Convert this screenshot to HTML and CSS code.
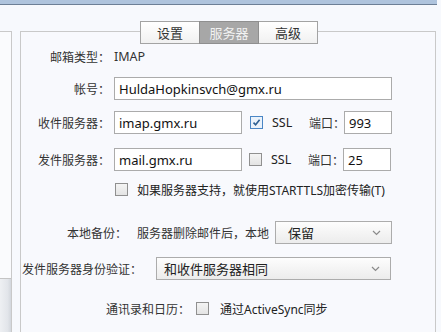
FILE: index.html
```html
<!DOCTYPE html>
<html lang="zh-CN">
<head>
    <meta charset="UTF-8">
    <meta name="viewport" content="width=device-width, initial-scale=1.0">
    <title>账户设置 - 服务器</title>
    <link rel="stylesheet" href="styles.css">
</head>
<body>
    <div class="topbar"></div>
    <div class="workspace">
        <div class="sidebar">
            <div class="sidebar-foot"></div>
        </div>
        <div class="panel">
            <div class="tabs">
                <div class="tab">设置</div>
                <div class="tab active">服务器</div>
                <div class="tab">高级</div>
            </div>

            <div class="row row-type">
                <span class="label">邮箱类型：</span>
                <span class="value">IMAP</span>
            </div>
            <div class="row row-account">
                <span class="label">帐号：</span>
                <input class="inp inp-wide" type="text" value="HuldaHopkinsvch@gmx.ru">
            </div>
            <div class="row row-in">
                <span class="label">收件服务器：</span>
                <input class="inp inp-mid" type="text" value="imap.gmx.ru">
                <span class="check checked">
                    <svg width="11" height="11" viewBox="0 0 11 11"><path d="M2.5 5.6 L4.6 7.8 L8.6 2.8" fill="none" stroke="#2c5f93" stroke-width="1.6"/></svg>
                </span>
                <span class="ssl">SSL</span>
                <span class="port-label">端口：</span>
                <input class="inp inp-port" type="text" value="993">
            </div>
            <div class="row row-out">
                <span class="label">发件服务器：</span>
                <input class="inp inp-mid" type="text" value="mail.gmx.ru">
                <span class="check"></span>
                <span class="ssl">SSL</span>
                <span class="port-label">端口：</span>
                <input class="inp inp-port" type="text" value="25">
            </div>
            <div class="row row-tls">
                <span class="check"></span>
                <span class="tls-text">如果服务器支持，就使用STARTTLS加密传输(T)</span>
            </div>
            <div class="row row-backup">
                <span class="label-free">本地备份：</span>
                <span class="note">服务器删除邮件后，本地</span>
                <div class="select sel-keep">
                    <span>保留</span>
                    <svg width="9" height="6" viewBox="0 0 9 6"><path d="M1 1 L4.5 4.5 L8 1" fill="none" stroke="#8a8a8a" stroke-width="1.2"/></svg>
                </div>
            </div>
            <div class="row row-auth">
                <span class="label-free">发件服务器身份验证：</span>
                <div class="select sel-auth">
                    <span>和收件服务器相同</span>
                    <svg width="9" height="6" viewBox="0 0 9 6"><path d="M1 1 L4.5 4.5 L8 1" fill="none" stroke="#8a8a8a" stroke-width="1.2"/></svg>
                </div>
            </div>
            <div class="row row-sync">
                <span class="label-free">通讯录和日历：</span>
                <span class="check"></span>
                <span class="sync-text">通过ActiveSync同步</span>
            </div>
        </div>
    </div>
</body>
</html>
```

FILE: styles.css
```css
* { box-sizing: border-box; }
html, body { margin: 0; padding: 0; }
body { font-family: "Noto Sans", "Noto Sans CJK SC", sans-serif; font-size: 12px; color: #2b2b2b; background: #f7f9fd; height: 332px; overflow: hidden; }

.topbar { height: 5px; background: #afc4dd; border-bottom: 1px solid #6d7f96; margin-right: 4px; }

.workspace { display: flex; margin-top: 26px; height: 301px; }
.sidebar { width: 12px; border-top: 1px solid #c9c9c9; border-right: 1px solid #c9c9c9; background: #fafbfd; display: flex; flex-direction: column; justify-content: flex-end; }
.sidebar-foot { height: 54px; border-top: 1px solid #c4c4c4; background: linear-gradient(90deg, #eef0f3 0%, #e2e5ea 70%, #d3d7dd 100%); }

.panel { flex: 1; margin-left: 8px; margin-right: 5px; border: 1px solid #c9c9c9; border-bottom: none; background: #f8f9fd; }

.tabs { display: flex; justify-content: center; margin-top: -11px; padding-left: 3px; }
.tab { width: 60px; height: 23px; border: 1px solid #a3a3a3; margin-left: -1px; background: linear-gradient(#ffffff, #f1f1f1); font-size: 13px; color: #333; display: flex; align-items: center; justify-content: center; }
.tab.active { background: #a7a7a7; border-color: #8f8f8f; color: #f2f2f2; position: relative; }

.row { display: flex; align-items: center; height: 23px; white-space: nowrap; }
.row > * { flex-shrink: 0; }
.label { width: 89px; text-align: right; margin-right: 4px; color: #333; }
.label-free { color: #333; }
.value { color: #333; font-size: 12.5px; }

.inp { height: 23px; border: 1px solid #ababab; background: #fff; padding: 0 0 0 4px; font-family: "Noto Sans", "Noto Sans CJK SC", sans-serif; font-size: 13px; color: #111; outline: none; }
.inp-wide { width: 278px; }
.inp-mid { width: 128px; }
.inp-port { width: 48px; }

.check { width: 13px; height: 13px; border: 1px solid #909090; background: linear-gradient(#f4f4f4, #e4e4e4); display: inline-flex; align-items: center; justify-content: center; margin-left: 8px; }
.check.checked { border-color: #4a86c5; background: #eaf2fb; }
.ssl { width: 37px; margin-left: 9px; font-size: 12.5px; color: #222; }
.port-label { width: 35px; color: #333; overflow: visible; }

.row-type { margin-top: 1px; }
.row-account { margin-top: 9px; }
.row-in { margin-top: 11px; }
.row-out { margin-top: 14px; }
.row-out .check { margin-left: 7px; }
.row-tls { margin-top: 7px; padding-left: 86px; }
.tls-text { margin-left: 9px; color: #222; }
.row-backup { margin-top: 20px; padding-left: 46px; }
.note { margin-left: 10px; color: #333; }

.select { height: 23px; border: 1px solid #acacac; background: linear-gradient(#fdfdfd, #ececec); display: flex; align-items: center; justify-content: space-between; padding: 0 10px 0 12px; font-size: 13px; color: #222; }
.sel-keep { width: 117px; margin-left: 6px; }
.sel-auth { width: 235px; margin-left: 14px; padding-left: 7px; }
.row-auth { margin-top: 13px; padding-left: 1px; }

.row-sync { margin-top: 17px; padding-left: 85px; }
.row-sync .check { margin-left: 6px; }
.sync-text { margin-left: 11px; color: #222; }
```
